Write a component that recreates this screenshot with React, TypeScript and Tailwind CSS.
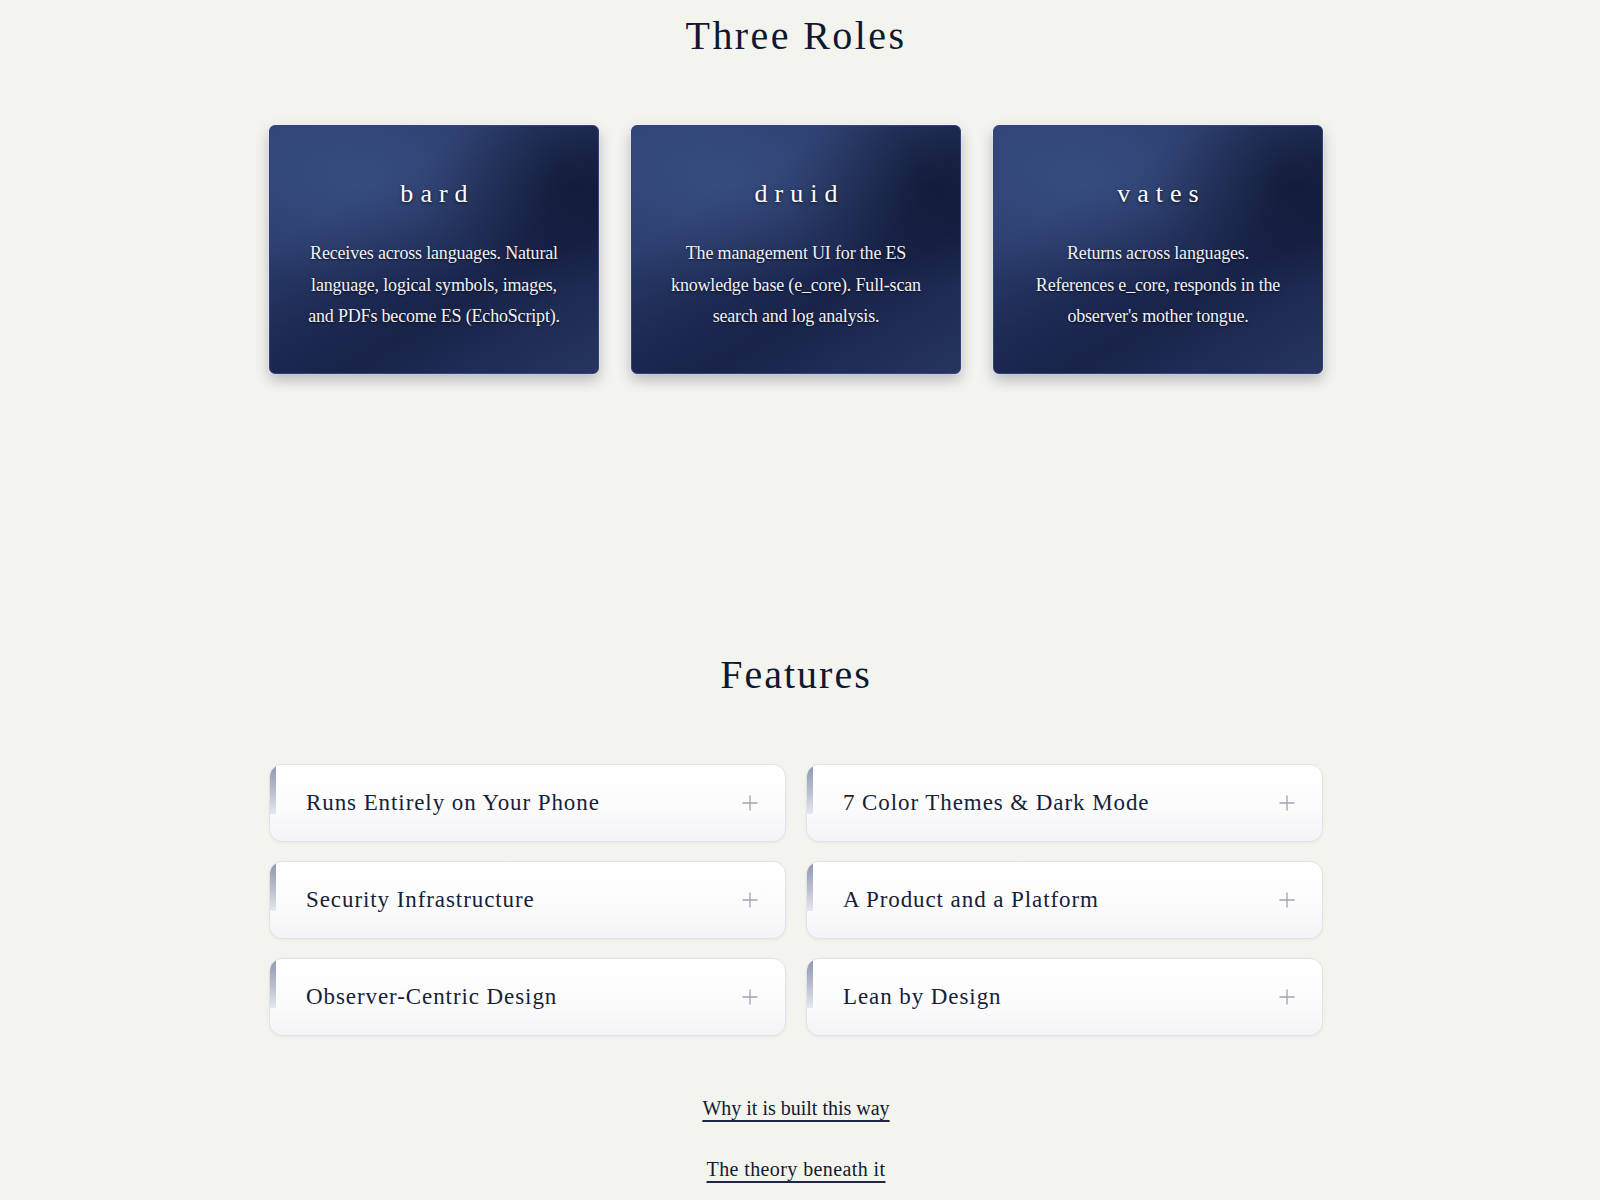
import React from "react";

const roles = [
  {
    name: "bard",
    text: "Receives across languages. Natural language, logical symbols, images, and PDFs become ES (EchoScript).",
  },
  {
    name: "druid",
    text: "The management UI for the ES knowledge base (e_core). Full-scan search and log analysis.",
  },
  {
    name: "vates",
    text: "Returns across languages. References e_core, responds in the observer's mother tongue.",
  },
];

const features = [
  "Runs Entirely on Your Phone",
  "7 Color Themes & Dark Mode",
  "Security Infrastructure",
  "A Product and a Platform",
  "Observer-Centric Design",
  "Lean by Design",
];

function RoleCard({ name, text }: { name: string; text: string }) {
  return (
    <div className="relative h-[249px] rounded-[6px] border border-[#30437a] bg-[radial-gradient(ellipse_60%_45%_at_28%_22%,rgba(70,95,150,0.45)_0%,rgba(70,95,150,0)_100%),radial-gradient(ellipse_45%_40%_at_92%_25%,rgba(12,18,40,0.55)_0%,rgba(12,18,40,0)_100%),linear-gradient(150deg,#2e4174_0%,#2a3c6b_28%,#1d2a53_50%,#19234a_66%,#263660_100%)] shadow-[0_6px_14px_rgba(20,28,55,0.28),0_0_0_1px_rgba(255,255,255,0.6)] px-[37px] pt-[52px] text-center">
      <h3 className="text-[26px] leading-[32px] tracking-[0.27em] pl-[0.27em] text-white [text-shadow:0_1px_3px_rgba(0,0,0,0.7)]">
        {name}
      </h3>
      <p className="mt-[28px] text-[18px] leading-[31.5px] tracking-[-0.01em] text-[#f1f2f6] [text-shadow:0_1px_2px_rgba(0,0,0,0.75)]">
        {text}
      </p>
    </div>
  );
}

function FeatureRow({ title }: { title: string }) {
  return (
    <div className="relative flex h-[78px] items-center justify-between overflow-hidden rounded-[13px] border border-[#e1e2ea] bg-[linear-gradient(180deg,#ffffff_0%,#fbfbfc_60%,#f4f4f7_100%)] pl-[36px] pr-[26px] shadow-[0_1px_3px_rgba(30,40,70,0.06)]">
      <span className="absolute left-0 top-0 h-[49px] w-[6px] bg-[linear-gradient(180deg,#8e97b2_0%,#b9bfcf_55%,#e6e8ef_100%)]" />
      <span className="text-[23px] tracking-[0.04em] text-[#161f3a]">{title}</span>
      <svg width="18" height="18" viewBox="0 0 18 18" className="text-[#9ea3b4]">
        <path d="M9 1.5v15M1.5 9h15" stroke="currentColor" strokeWidth="1.3" fill="none" />
      </svg>
    </div>
  );
}

export default function App() {
  return (
    <div className="min-h-[1200px] w-full bg-[#f4f4ef] text-[#121a33] [font-family:'Liberation_Serif','DejaVu_Serif',serif]">
      <div className="w-[1592px]">
        <section className="pt-[12px] flex flex-col items-center">
          <h2 className="text-[40px] leading-[48px] tracking-[0.06em] text-[#0f1832]">Three Roles</h2>
          <div className="mt-[65px] grid w-[1054px] grid-cols-3 gap-[32px]">
            {roles.map((r) => (
              <RoleCard key={r.name} name={r.name} text={r.text} />
            ))}
          </div>
        </section>

        <section className="mt-[277px] flex flex-col items-center">
          <h2 className="text-[40px] leading-[48px] tracking-[0.05em] text-[#0f1832]">Features</h2>
          <div className="mt-[65px] grid w-[1054px] grid-cols-2 gap-x-[20px] gap-y-[19px]">
            {features.map((f) => (
              <FeatureRow key={f} title={f} />
            ))}
          </div>
          <div className="mt-[58px] flex flex-col items-center gap-[33px]">
            <a href="#" className="text-[20px] leading-[28px] text-[#121a33] underline decoration-[#1e2845] decoration-2 underline-offset-[5px]">
              Why it is built this way
            </a>
            <a href="#" className="text-[20px] leading-[28px] tracking-[0.02em] text-[#121a33] underline decoration-[#1e2845] decoration-2 underline-offset-[5px]">
              The theory beneath it
            </a>
          </div>
        </section>
      </div>
    </div>
  );
}
